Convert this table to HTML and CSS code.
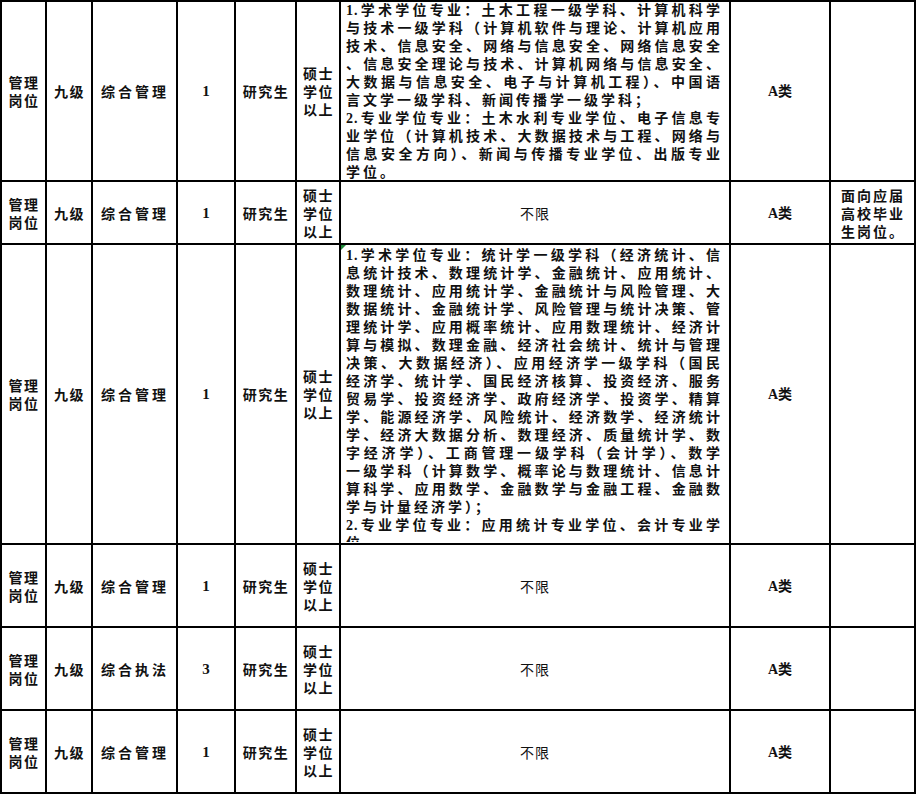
FILE: index.html
```html
<!DOCTYPE html>
<html lang="zh-CN">
<head>
<meta charset="utf-8">
<title>岗位表</title>
<link rel="stylesheet" href="styles.css">
</head>
<body>
<table class="sheet">
  <colgroup>
    <col class="c-type"><col class="c-level"><col class="c-name"><col class="c-num"><col class="c-edu"><col class="c-deg"><col class="c-major"><col class="c-cat"><col class="c-note">
  </colgroup>
  <tbody>
    <tr class="r-1">
      <td class="sm">管理<br>岗位</td>
      <td class="sm">九级</td>
      <td class="sm wide">综合管理</td>
      <td class="num">1</td>
      <td class="sm">研究生</td>
      <td class="sm">硕士<br>学位<br>以上</td>
      <td class="major top">
        <div class="lines fit">
          <div class="ln">1.学术学位专业：土木工程一级学科、计算机科学</div>
          <div class="ln">与技术一级学科（计算机软件与理论、计算机应用</div>
          <div class="ln">技术、信息安全、网络与信息安全、网络信息安全</div>
          <div class="ln">、信息安全理论与技术、计算机网络与信息安全、</div>
          <div class="ln">大数据与信息安全、电子与计算机工程）、中国语</div>
          <div class="ln end">言文学一级学科、新闻传播学一级学科；</div>
          <div class="ln">2.专业学位专业：土木水利专业学位、电子信息专</div>
          <div class="ln">业学位（计算机技术、大数据技术与工程、网络与</div>
          <div class="ln">信息安全方向）、新闻与传播专业学位、出版专业</div>
          <div class="ln end">学位。</div>
        </div>
      </td>
      <td class="cat"><span class="latin">A</span>类</td>
      <td class="note"></td>
    </tr>
    <tr class="r-2">
      <td class="sm">管理<br>岗位</td>
      <td class="sm">九级</td>
      <td class="sm wide">综合管理</td>
      <td class="num">1</td>
      <td class="sm">研究生</td>
      <td class="sm">硕士<br>学位<br>以上</td>
      <td class="major any">不限</td>
      <td class="cat"><span class="latin">A</span>类</td>
      <td class="note sm">面向应届<br>高校毕业<br>生岗位。</td>
    </tr>
    <tr class="r-3">
      <td class="sm">管理<br>岗位</td>
      <td class="sm">九级</td>
      <td class="sm wide">综合管理</td>
      <td class="num">1</td>
      <td class="sm">研究生</td>
      <td class="sm">硕士<br>学位<br>以上</td>
      <td class="major top">
        <div class="lines clip">
          <span class="flag"></span>
          <div class="ln">1.学术学位专业：统计学一级学科（经济统计、信</div>
          <div class="ln">息统计技术、数理统计学、金融统计、应用统计、</div>
          <div class="ln">数理统计、应用统计学、金融统计与风险管理、大</div>
          <div class="ln">数据统计、金融统计学、风险管理与统计决策、管</div>
          <div class="ln">理统计学、应用概率统计、应用数理统计、经济计</div>
          <div class="ln">算与模拟、数理金融、经济社会统计、统计与管理</div>
          <div class="ln">决策、大数据经济）、应用经济学一级学科（国民</div>
          <div class="ln">经济学、统计学、国民经济核算、投资经济、服务</div>
          <div class="ln">贸易学、投资经济学、政府经济学、投资学、精算</div>
          <div class="ln">学、能源经济学、风险统计、经济数学、经济统计</div>
          <div class="ln">学、经济大数据分析、数理经济、质量统计学、数</div>
          <div class="ln">字经济学）、工商管理一级学科（会计学）、数学</div>
          <div class="ln">一级学科（计算数学、概率论与数理统计、信息计</div>
          <div class="ln">算科学、应用数学、金融数学与金融工程、金融数</div>
          <div class="ln end">学与计量经济学）；</div>
          <div class="ln">2.专业学位专业：应用统计专业学位、会计专业学</div>
          <div class="ln end">位</div>
        </div>
      </td>
      <td class="cat"><span class="latin">A</span>类</td>
      <td class="note"></td>
    </tr>
    <tr class="r-4">
      <td class="sm">管理<br>岗位</td>
      <td class="sm">九级</td>
      <td class="sm wide">综合管理</td>
      <td class="num">1</td>
      <td class="sm">研究生</td>
      <td class="sm">硕士<br>学位<br>以上</td>
      <td class="major any">不限</td>
      <td class="cat"><span class="latin">A</span>类</td>
      <td class="note"></td>
    </tr>
    <tr class="r-4">
      <td class="sm">管理<br>岗位</td>
      <td class="sm">九级</td>
      <td class="sm wide">综合执法</td>
      <td class="num">3</td>
      <td class="sm">研究生</td>
      <td class="sm">硕士<br>学位<br>以上</td>
      <td class="major any">不限</td>
      <td class="cat"><span class="latin">A</span>类</td>
      <td class="note"></td>
    </tr>
    <tr class="r-4">
      <td class="sm">管理<br>岗位</td>
      <td class="sm">九级</td>
      <td class="sm wide">综合管理</td>
      <td class="num">1</td>
      <td class="sm">研究生</td>
      <td class="sm">硕士<br>学位<br>以上</td>
      <td class="major any">不限</td>
      <td class="cat"><span class="latin">A</span>类</td>
      <td class="note"></td>
    </tr>
  </tbody>
</table>
</body>
</html>
```

FILE: styles.css
```css
html, body {
  margin: 0;
  padding: 0;
  background: #fff;
}

body {
  font-family: "Liberation Serif", "Noto Sans CJK SC", serif;
  color: #111;
}

.sheet {
  table-layout: fixed;
  border-collapse: collapse;
  width: 916px;
}

.c-type { width: 45px; }
.c-level { width: 46px; }
.c-name { width: 85px; }
.c-num { width: 58px; }
.c-edu { width: 61px; }
.c-deg { width: 44px; }
.c-major { width: 390px; }
.c-cat { width: 100px; }
.c-note { width: 85px; }

.sheet td {
  border: 2px solid #000;
  padding: 0;
  vertical-align: middle;
  text-align: center;
  font-size: 14px;
  line-height: 18px;
  font-weight: 700;
  overflow: hidden;
}

.r-1 { height: 177px; }
.r-2 { height: 63px; }
.r-3 { height: 300px; }
.r-4 { height: 83px; }

.sheet td.sm {
  font-family: "Noto Sans CJK SC", sans-serif;
  letter-spacing: 1.5px;
  padding-left: 1px;
}

.sheet td.wide {
  letter-spacing: 3px;
}

.sheet td.num {
  font-family: "Liberation Serif", serif;
  font-size: 15px;
}

.sheet td.cat {
  font-family: "Noto Sans CJK SC", sans-serif;
  font-size: 14px;
}

.latin {
  font-family: "Liberation Serif", serif;
  font-weight: 700;
}

.sheet td.major.top {
  vertical-align: top;
  text-align: left;
}

.sheet td.major.any {
  font-family: "Noto Sans CJK SC", sans-serif;
  font-weight: 400;
  letter-spacing: 1px;
}

.sheet td.note.sm {
  letter-spacing: 2px;
}

.lines {
  position: relative;
  padding: 0 8px 0 5px;
  font-family: "Liberation Serif", "Noto Sans CJK SC", sans-serif;
  font-weight: 700;
  font-size: 14px;
  line-height: 18px;
  box-sizing: border-box;
  overflow: hidden;
}

.lines.fit {
  height: 178px;
}

.lines.clip {
  height: 297px;
  padding-top: 2px;
}

.ln {
  white-space: nowrap;
  text-align: justify;
  text-align-last: justify;
  letter-spacing: 1px;
}

.ln.end {
  text-align: left;
  text-align-last: left;
  letter-spacing: 3px;
}

.flag {
  position: absolute;
  left: 0;
  top: 0;
  width: 0;
  height: 0;
  border-top: 5px solid #1f8a3a;
  border-right: 5px solid transparent;
}
```
